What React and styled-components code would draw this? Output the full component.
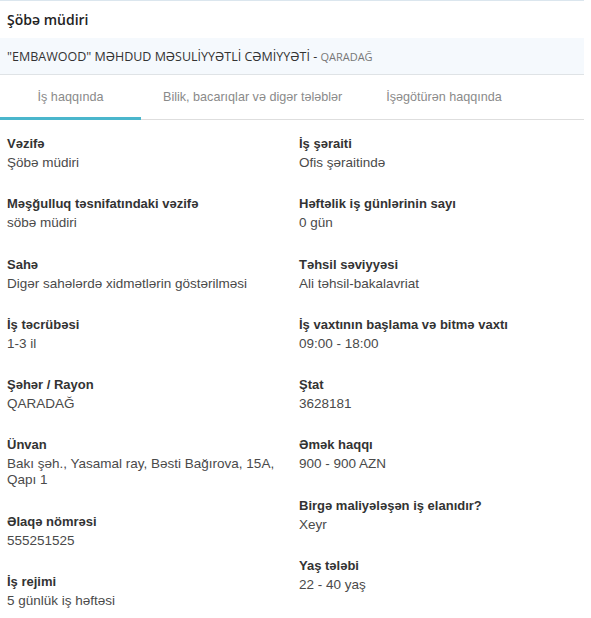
import React from "react";
import styled, { createGlobalStyle } from "styled-components";

const GlobalStyle = createGlobalStyle`
  body {
    margin: 0;
    background: #fff;
    font-family: "Liberation Sans", Arial, sans-serif;
  }
`;

const leftItems = [
  { label: "Vəzifə", value: "Şöbə müdiri" },
  { label: "Məşğulluq təsnifatındaki vəzifə", value: "söbə müdiri" },
  { label: "Sahə", value: "Digər sahələrdə xidmətlərin göstərilməsi" },
  { label: "İş təcrübəsi", value: "1-3 il" },
  { label: "Şəhər / Rayon", value: "QARADAĞ" },
  { label: "Ünvan", value: "Bakı şəh., Yasamal ray, Bəsti Bağırova, 15A, Qapı 1" },
  { label: "Əlaqə nömrəsi", value: "555251525" },
  { label: "İş rejimi", value: "5 günlük iş həftəsi" },
];

const rightItems = [
  { label: "İş şəraiti", value: "Ofis şəraitində" },
  { label: "Həftəlik iş günlərinin sayı", value: "0 gün" },
  { label: "Təhsil səviyyəsi", value: "Ali təhsil-bakalavriat" },
  { label: "İş vaxtının başlama və bitmə vaxtı", value: "09:00 - 18:00" },
  { label: "Ştat", value: "3628181" },
  { label: "Əmək haqqı", value: "900 - 900 AZN" },
  { label: "Birgə maliyələşən iş elanıdır?", value: "Xeyr" },
  { label: "Yaş tələbi", value: "22 - 40 yaş" },
];

const tabs = ["İş haqqında", "Bilik, bacarıqlar və digər tələblər", "İşəgötürən haqqında"];

const App = () => {
  return (
    <>
      <GlobalStyle />
      <StyledVacancy>
        <div className="title">Şöbə müdiri</div>
        <div className="company">
          "EMBAWOOD" MƏHDUD MƏSULİYYƏTLİ CƏMİYYƏTİ - <span>QARADAĞ</span>
        </div>
        <Tabs>
          {tabs.map((t, i) => (
            <Tab key={t} $active={i === 0}>
              {t}
            </Tab>
          ))}
        </Tabs>
        <Details>
          {[leftItems, rightItems].map((col, i) => (
            <Column key={i}>
              {col.map((item) => (
                <Field key={item.label}>
                  <div className="label">{item.label}</div>
                  <div className="value">{item.value}</div>
                </Field>
              ))}
            </Column>
          ))}
        </Details>
      </StyledVacancy>
    </>
  );
};

const StyledVacancy = styled.div`
  width: 584px;
  border-top: 1px solid #dbe6ee;

  .title {
    height: 37px;
    display: flex;
    align-items: center;
    padding-left: 7px;
    font-family: "Open Sans", "Noto Sans", sans-serif;
    font-size: 14px;
    font-weight: 600;
    color: #222;
  }

  .company {
    height: 36px;
    display: flex;
    align-items: center;
    padding-left: 7px;
    background: #f5f9fd;
    border-bottom: 1px solid #dfe3e6;
    font-family: "Open Sans", "Noto Sans", sans-serif;
    font-size: 12.5px;
    color: #333;
    white-space: pre;

    span {
      font-size: 11px;
      color: #777;
    }
  }
`;

const Tabs = styled.div`
  display: flex;
  height: 44px;
  border-bottom: 1px solid #dedede;
`;

const Tab = styled.div`
  min-width: 141px;
  box-sizing: border-box;
  padding: 2px 22px 0;
  display: flex;
  align-items: center;
  justify-content: center;
  font-size: 12.6px;
  color: #8a8a8a;
  border-bottom: 3px solid ${(p) => (p.$active ? "#4ab6cc" : "transparent")};
  margin-bottom: -1px;
`;

const Details = styled.div`
  display: grid;
  grid-template-columns: 1fr 1fr;
  padding-top: 15px;
`;

const Column = styled.div`
  display: flex;
  flex-direction: column;
  padding-left: 7px;
  padding-right: 10px;
`;

const Field = styled.div`
  margin-bottom: 24.3px;

  .label {
    font-size: 13px;
    line-height: 17px;
    font-weight: bold;
    color: #333;
    margin-bottom: 3px;
  }

  .value {
    font-size: 13.5px;
    line-height: 16px;
    color: #4a4a4a;
  }
`;

export default App;
